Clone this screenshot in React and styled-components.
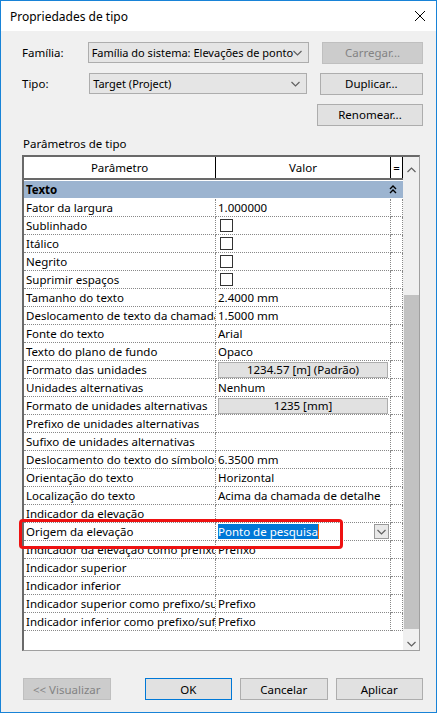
import React from "react";
import styled, { createGlobalStyle } from "styled-components";

const Global = createGlobalStyle`
  html, body { margin: 0; padding: 0; }
  body { font-family: "Noto Sans", "Liberation Sans", sans-serif; font-size: 11.5px; color: #000; }
`;

const Window = styled.div`
  width: 437px;
  height: 713px;
  box-sizing: border-box;
  border: 1px solid #1883d7;
  background: #f0f0f0;
  display: flex;
  flex-direction: column;
`;

const TitleBar = styled.div`
  height: 30px;
  background: #fff;
  display: flex;
  align-items: center;
  justify-content: space-between;
  padding: 0 10px 0 9px;
  font-size: 12px;
`;

const Body = styled.div`
  flex: 1;
  padding: 11px 13px 0 21px;
  display: flex;
  flex-direction: column;
`;

const FormRow = styled.div`
  display: flex;
  align-items: center;
  height: 21px;
  margin-bottom: ${(p) => p.gap || 10}px;
`;

const Label = styled.div`
  width: 69px;
`;

const Combo = styled.div`
  width: 212px;
  height: 19px;
  border: 1px solid #adadad;
  background: #e5e5e5;
  display: flex;
  align-items: center;
  justify-content: space-between;
  padding: 0 6px 0 3px;
  box-sizing: content-box;
  white-space: nowrap;
  font-size: 11px;
`;

const Button = styled.div`
  width: ${(p) => p.w || 104}px;
  height: 20px;
  box-sizing: content-box;
  border: 1px solid ${(p) => (p.primary ? "#0078d7" : p.disabled ? "#bfbfbf" : "#adadad")};
  background: ${(p) => (p.disabled ? "#cccccc" : "#e1e1e1")};
  color: ${(p) => (p.disabled ? "#838383" : "#000")};
  display: flex;
  align-items: center;
  justify-content: center;
  margin-left: ${(p) => p.ml || 0}px;
`;

const Spacer = styled.div`
  flex: 1;
`;

const SectionLabel = styled.div`
  margin: 5px 0 4px 1px;
`;

const Grid = styled.div`
  position: relative;
  width: 398px;
  height: 496px;
  box-sizing: border-box;
  border: 1px solid #a0a0a0;
  border-left: 2px solid #696969;
  border-top: 2px solid #696969;
  background: #fff;
  display: flex;
`;

const Table = styled.div`
  flex: 1;
  display: flex;
  flex-direction: column;
`;

const Header = styled.div`
  display: grid;
  grid-template-columns: 192px 175px 12px;
  height: 21px;
  border-bottom: 2px solid #696969;
  & > div {
    display: flex;
    align-items: center;
    justify-content: center;
    border-right: 1px solid #000;
  }
`;

const Group = styled.div`
  height: 17px;
  margin-top: 1px;
  margin-bottom: 1px;
  background: #9cb4d0;
  font-weight: bold;
  display: flex;
  align-items: center;
  justify-content: space-between;
  padding: 0 6px 0 2px;
  width: 379px;
  box-sizing: border-box;
`;

const Row = styled.div`
  display: grid;
  grid-template-columns: 192px 175px 12px;
  height: 18px;
  & > div {
    border-right: 1px dotted #888;
    border-bottom: 1px dotted #888;
    display: flex;
    align-items: center;
    padding-left: 2px;
    white-space: nowrap;
    overflow: hidden;
    box-sizing: border-box;
  }
`;

const Check = styled.span`
  width: 11px;
  height: 11px;
  border: 1px solid #333;
  background: #fff;
  margin-left: 2px;
`;

const CellButton = styled.span`
  flex: 1;
  height: 14px;
  margin-right: 2px;
  background: #e1e1e1;
  border: 1px solid #adadad;
  display: flex;
  align-items: center;
  justify-content: center;
`;

const Selected = styled.span`
  background: #0078d7;
  color: #fff;
  border-right: 1px solid #f60;
`;

const Dropper = styled.span`
  margin-left: auto;
  margin-right: 1px;
  width: 13px;
  height: 13px;
  border: 1px solid #999;
  background: #e8e8e8;
  display: flex;
  align-items: center;
  justify-content: center;
`;

const Scroll = styled.div`
  width: 17px;
  background: #f0f0f0;
  display: flex;
  flex-direction: column;
  align-items: center;
`;

const Thumb = styled.div`
  margin-top: 119px;
  width: 15px;
  height: 338px;
  background: #c2c2c2;
`;

const Highlight = styled.div`
  position: absolute;
  left: -5px;
  top: 362px;
  width: 318px;
  height: 24px;
  border: 3px solid #ee1111;
  border-radius: 4px;
  pointer-events: none;
`;

const Footer = styled.div`
  display: flex;
  align-items: center;
  margin-top: 27px;
  padding-left: 1px;
`;

const Chevron = ({ up }) => (
  <svg width="9" height="6" viewBox="0 0 9 6">
    <path d={up ? "M0.5 5 L4.5 1 L8.5 5" : "M0.5 1 L4.5 5 L8.5 1"} fill="none" stroke="#606060" strokeWidth="1.2" />
  </svg>
);

const rows = [
  ["Fator da largura", "1.000000"],
  ["Sublinhado", "check"],
  ["Itálico", "check"],
  ["Negrito", "check"],
  ["Suprimir espaços", "check"],
  ["Tamanho do texto", "2.4000 mm"],
  ["Deslocamento de texto da chamada", "1.5000 mm"],
  ["Fonte do texto", "Arial"],
  ["Texto do plano de fundo", "Opaco"],
  ["Formato das unidades", "btn:1234.57 [m] (Padrão)"],
  ["Unidades alternativas", "Nenhum"],
  ["Formato de unidades alternativas", "btn:1235 [mm]"],
  ["Prefixo de unidades alternativas", ""],
  ["Sufixo de unidades alternativas", ""],
  ["Deslocamento do texto do símbolo", "6.3500 mm"],
  ["Orientação do texto", "Horizontal"],
  ["Localização do texto", "Acima da chamada de detalhe"],
  ["Indicador da elevação", ""],
  ["Origem da elevação", "sel"],
  ["Indicador da elevação como prefixo", "Prefixo"],
  ["Indicador superior", ""],
  ["Indicador inferior", ""],
  ["Indicador superior como prefixo/sufixo", "Prefixo"],
  ["Indicador inferior como prefixo/sufixo", "Prefixo"],
];

const Value = ({ v }) => {
  if (v === "check") return <Check />;
  if (v.startsWith("btn:")) return <CellButton>{v.slice(4)}</CellButton>;
  if (v === "sel")
    return (
      <>
        <Selected>Ponto de pesquisa</Selected>
        <Dropper>
          <Chevron />
        </Dropper>
      </>
    );
  return v;
};

export default function App() {
  return (
    <Window>
      <Global />
      <TitleBar>
        <span>Propriedades de tipo</span>
        <svg width="12" height="12" viewBox="0 0 12 12">
          <path d="M1 1 L11 11 M11 1 L1 11" stroke="#000" strokeWidth="1" />
        </svg>
      </TitleBar>
      <Body>
        <FormRow>
          <Label>Família:</Label>
          <Combo>
            Família do sistema: Elevações de ponto <Chevron />
          </Combo>
          <Button disabled ml={13}>Carregar...</Button>
        </FormRow>
        <FormRow>
          <Label>Tipo:</Label>
          <Combo>
            Target (Project) <Chevron />
          </Combo>
          <Button ml={13}>Duplicar...</Button>
        </FormRow>
        <FormRow gap={6}>
          <Spacer />
          <Button>Renomear...</Button>
        </FormRow>
        <SectionLabel>Parâmetros de tipo</SectionLabel>
        <Grid>
          <Table>
            <Header>
              <div>Parâmetro</div>
              <div>Valor</div>
              <div>=</div>
            </Header>
            <Group>
              Texto
              <svg width="8" height="9" viewBox="0 0 8 9">
                <path d="M1 4 L4 1 L7 4 M1 8 L4 5 L7 8" fill="none" stroke="#000" strokeWidth="1.4" />
              </svg>
            </Group>
            {rows.map(([k, v]) => (
              <Row key={k}>
                <div>{k}</div>
                <div>
                  <Value v={v} />
                </div>
                <div />
              </Row>
            ))}
          </Table>
          <Scroll>
            <div style={{ marginTop: 4 }}>
              <Chevron up />
            </div>
            <Thumb />
            <div style={{ marginTop: 6 }}>
              <Chevron />
            </div>
          </Scroll>
          <Highlight />
        </Grid>
        <Footer>
          <Button disabled w={86}>&lt;&lt; Visualizar</Button>
          <Button primary w={86} ml={34}>OK</Button>
          <Button w={86} ml={8}>Cancelar</Button>
          <Button w={86} ml={8}>Aplicar</Button>
        </Footer>
      </Body>
    </Window>
  );
}
